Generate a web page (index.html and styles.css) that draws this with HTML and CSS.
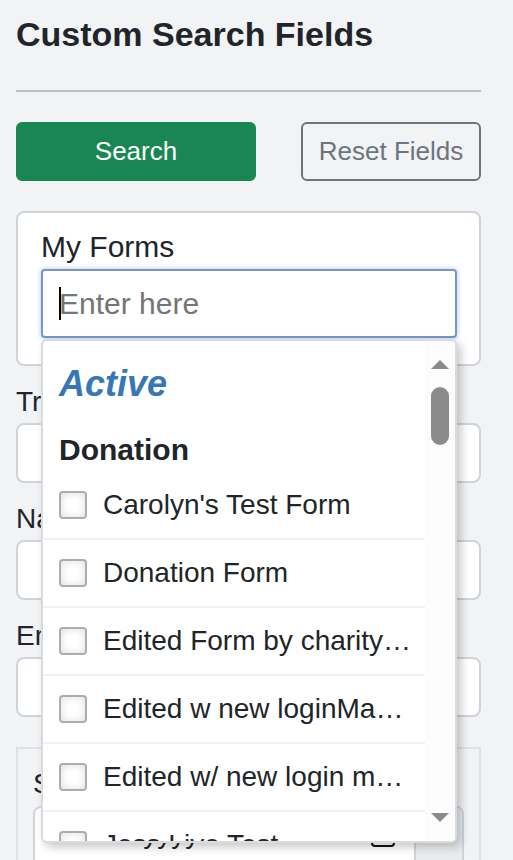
FILE: index.html
```html
<!DOCTYPE html>
<html lang="en">
<head>
<meta charset="utf-8">
<meta name="viewport" content="width=device-width, initial-scale=1">
<title>Custom Search Fields</title>
<link rel="stylesheet" href="styles.css">
</head>
<body>
<form class="panel">
  <h1 class="title">Custom Search Fields</h1>
  <hr class="rule">
  <div class="actions">
    <button type="button" class="btn btn-search">Search</button>
    <button type="reset" class="btn btn-reset">Reset Fields</button>
  </div>
  <section class="card">
    <label class="label" for="forms">My Forms</label>
    <div class="combo">
      <span class="caret"></span>
      <input class="combo-input" id="forms" type="text" placeholder="Enter here">
      <div class="menu">
        <div class="menu-list">
          <h2 class="status">Active</h2>
          <h3 class="group">Donation</h3>
          <label class="option"><input type="checkbox"><span>Carolyn's Test Form</span></label>
          <label class="option"><input type="checkbox"><span>Donation Form</span></label>
          <label class="option"><input type="checkbox"><span>Edited Form by charity admin</span></label>
          <label class="option"><input type="checkbox"><span>Edited w new loginManager</span></label>
          <label class="option"><input type="checkbox"><span>Edited w/ new login manager</span></label>
          <label class="option"><input type="checkbox"><span>Jess Live Test</span></label>
        </div>
        <div class="scrollbar">
          <svg class="arrow" viewBox="0 0 18 9"><path d="M0 9L9 0L18 9Z"/></svg>
          <span class="thumb"></span>
          <svg class="arrow arrow-down" viewBox="0 0 18 9"><path d="M0 0L9 9L18 0Z"/></svg>
        </div>
      </div>
    </div>
  </section>
  <div class="field">
    <label class="label" for="transaction">Transaction ID</label>
    <input class="control" id="transaction" type="text">
  </div>
  <div class="field">
    <label class="label" for="name">Name</label>
    <input class="control" id="name" type="text">
  </div>
  <div class="field">
    <label class="label" for="email">Email</label>
    <input class="control" id="email" type="text">
  </div>
  <section class="dates">
    <label class="label" for="start">Start Date</label>
    <div class="date-group">
      <div class="date-box">
        <input class="date-input" id="start" type="text" placeholder="mm/dd/yyyy">
        <svg class="calendar" viewBox="0 0 24 26"><path d="M4 4H20Q23 4 23 7V22Q23 25 20 25H4Q1 25 1 22V7Q1 4 4 4ZM1 10H23M7 1V6M17 1V6"/></svg>
      </div>
      <span class="addon"></span>
    </div>
  </section>
</form>
</body>
</html>
```

FILE: styles.css
```css
* { box-sizing: border-box; }

html { overflow: hidden; }

body {
  margin: 0;
  height: 100vh;
  overflow: hidden;
  background: #f1f3f5;
  color: #212529;
  font-family: "Liberation Sans", Arial, sans-serif;
  font-size: 28px;
}

input, button { font: inherit; }

.panel { padding: 14px 32px 0 16px; }

.title {
  margin: 0;
  font-size: 34px;
  line-height: 40px;
}

.rule {
  height: 2px;
  margin: 36px 0 30px;
  border: 0;
  background: #bcbebf;
}

.actions {
  display: flex;
  justify-content: space-between;
  margin-bottom: 30px;
}

.btn {
  height: 59px;
  padding: 0 15px;
  border: 2px solid #6c757d;
  border-radius: 6px;
  font-size: 26px;
  white-space: nowrap;
}

.btn-search {
  width: 240px;
  border-color: #198754;
  background: #198754;
  color: #fff;
}

.btn-reset {
  width: 180px;
  padding: 0;
  background: transparent;
  color: #6c757d;
}

.card {
  height: 155px;
  margin-bottom: 18px;
  padding: 16px 22px 0 23px;
  border: 2px solid #ced4da;
  border-radius: 8px;
  background: #fff;
}

.label {
  display: block;
  line-height: 36px;
  white-space: nowrap;
}

.card .label { font-size: 30px; }

.combo { position: relative; margin-top: 4px; }

.combo-input {
  display: block;
  width: 100%;
  height: 69px;
  padding: 0 16px;
  border: 2px solid #7996c7;
  border-radius: 4px;
  outline: 0;
  background: #fff;
  box-shadow: 0 0 4px 1px #c3d5f5;
  font-size: 30px;
}

.combo-input::placeholder { color: #757575; opacity: 1; }

.caret {
  position: absolute;
  top: 18px;
  left: 18px;
  width: 2px;
  height: 33px;
  background: #000;
}

.menu {
  position: absolute;
  z-index: 2;
  top: 70px;
  left: 0;
  display: flex;
  width: 100%;
  height: 504px;
  overflow: hidden;
  border: 2px solid #d9dbdd;
  border-radius: 6px;
  background: #fff;
  box-shadow: 4px 4px 10px rgba(0, 0, 0, 0.22);
}

.menu-list {
  flex: 1;
  min-width: 0;
  overflow: hidden;
}

.status {
  margin: 21px 16px 0;
  color: #3777b5;
  font-size: 36px;
  font-style: italic;
  line-height: 44px;
}

.group {
  margin: 26px 16px 4px;
  font-size: 30px;
  line-height: 36px;
}

.menu-list .option {
  display: flex;
  align-items: center;
  gap: 16px;
  height: 68px;
  padding: 0 12px 0 16px;
  border-bottom: 2px solid #f2f2f3;
}

.option span {
  overflow: hidden;
  text-overflow: ellipsis;
  white-space: nowrap;
}

.option input {
  flex: none;
  width: 28px;
  height: 28px;
  margin: 0;
  appearance: none;
  border: 2px solid #adadad;
  border-radius: 4px;
  background: #fff;
  box-shadow: inset 0 0 8px #ddd;
}

.scrollbar {
  display: flex;
  flex-direction: column;
  align-items: center;
  width: 30px;
  padding: 19px 0;
  background: #fcfcfc;
}

.arrow { width: 18px; height: 9px; fill: #8b8b8b; }

.arrow-down { margin-top: auto; }

.thumb {
  width: 18px;
  height: 58px;
  margin-top: 18px;
  border-radius: 9px;
  background: #8b8b8b;
}

.field { margin-bottom: 18px; }

.control {
  display: block;
  width: 100%;
  height: 60px;
  margin-top: 3px;
  border: 2px solid #ced4da;
  border-radius: 8px;
  background: #fff;
}

.dates {
  margin-top: 30px;
  padding: 17px 15px 24px;
  border: 2px solid #dee2e6;
}

.date-group {
  display: flex;
  height: 70px;
  margin-top: 4px;
  border: 2px solid #ced4da;
  border-radius: 8px;
  background: #fff;
}

.date-box {
  display: flex;
  flex: 1;
  align-items: center;
  min-width: 0;
  padding: 0 19px 14px 15px;
}

.date-input {
  flex: 1;
  min-width: 0;
  padding: 0;
  border: 0;
  background: transparent;
}

.date-input::placeholder { color: #212529; opacity: 1; }

.calendar { width: 24px; height: 26px; fill: none; stroke: #111; stroke-width: 2; }

.addon {
  width: 48px;
  border-left: 2px solid #ced4da;
  border-radius: 0 6px 6px 0;
  background: #e9ecef;
}
```
